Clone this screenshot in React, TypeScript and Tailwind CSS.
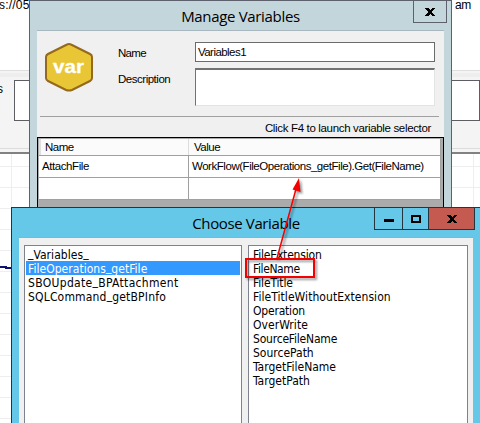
import type { ReactNode } from "react";

const components = [
  { name: "_Variables_", track: "tracking-[0.05px]" },
  { name: "FileOperations_getFile", track: "tracking-[0.04px]" },
  { name: "SBOUpdate_BPAttachment", track: "tracking-[0.32px]" },
  { name: "SQLCommand_getBPInfo", track: "tracking-[0.18px]" },
];

const properties = [
  { name: "FileExtension", track: "tracking-[-0.18px]" },
  { name: "FileName", track: "tracking-[-0.4px]" },
  { name: "FileTitle", track: "tracking-[-0.15px]" },
  { name: "FileTitleWithoutExtension", track: "tracking-[0.06px]" },
  { name: "Operation", track: "tracking-[-0.2px]" },
  { name: "OverWrite", track: "tracking-[0.05px]" },
  { name: "SourceFileName", track: "tracking-[-0.2px]" },
  { name: "SourcePath", track: "tracking-[0px]" },
  { name: "TargetFileName", track: "tracking-[0px]" },
  { name: "TargetPath", track: "tracking-[0px]" },
];

function Backdrop() {
  return (
    <div className="flex h-full flex-col bg-white text-[12px]">
      <div className="flex h-[71px] shrink-0 justify-between border-b border-[#dedede] leading-[10px]">
        <span className="-ml-px tracking-[0.2px]">s://05</span>
        <span className="mr-[9px] tracking-[-0.3px]">0 am</span>
      </div>
      <div className="flex h-[83px] shrink-0 flex-col border-b-2 border-[#818181] bg-[#f4f4f4]">
        <div className="mt-[2px] h-[4px] shrink-0 bg-[#eeeeee]" />
        <div className="mt-[3px] flex h-[41px] shrink-0">
          <span className="-ml-[3px] w-[17px] pt-[3px] leading-3">s</span>
          <div className="flex-1 border border-[#5d5d64] bg-white" />
        </div>
        <div className="mt-[27px] h-px shrink-0 bg-[#dcdcdc]" />
      </div>
      <div className="flex-1 overflow-hidden bg-white">
        <svg className="h-full w-full" width="480" height="269">
          {Array.from({ length: 13 }, (_, i) => (
            <path key={i} d={`M0 ${12.5 + i * 21}H480`} stroke="#eeeeee" />
          ))}
          <path d="M11.5 0V269M473.5 0V269" stroke="#eeeeee" />
          <path d="M0 113H6V114H12" stroke="#101070" strokeWidth="2" fill="none" />
        </svg>
      </div>
    </div>
  );
}

function VarIcon() {
  return (
    <svg width="50" height="50" viewBox="0 0 50 50">
      <path
        d="M25 2Q26 2 28 3L46 12Q48 13 48 15V36Q48 38 46 39L28 48Q25 49 22 48L4 39Q2 38 2 36V15Q2 13 4 12L22 3Q24 2 25 2Z"
        fill="#e9c635"
        stroke="#94691b"
        strokeWidth="2"
      />
      <text x="9" y="31" textLength="31" lengthAdjust="spacingAndGlyphs" fill="white" stroke="white" strokeWidth="0.3" fontSize="19" fontWeight="700" fontFamily="Liberation Sans, sans-serif">
        var
      </text>
    </svg>
  );
}

function CloseGlyph() {
  return (
    <svg width="10" height="8" viewBox="0 0 10 8" shapeRendering="crispEdges">
      <path d="M0 0H3L5 2L7 0H10L6.5 4L10 8H7L5 6L3 8H0L3.5 4Z" fill="#000" />
    </svg>
  );
}

function Cell({ children, className }: { children?: ReactNode; className: string }) {
  return <div className={`flex items-center border-[#a0a0a0] ${className}`}>{children}</div>;
}

function ManageVariables() {
  return (
    <section className="absolute top-0 left-[29px] flex h-[240px] w-[423px] flex-col border border-[#5c616d] bg-[#c3d6dc] px-[7px] text-[11.5px]">
      <header className="relative flex h-[29px] shrink-0 items-center justify-center">
        <h1 className="text-[15px] leading-5 tracking-[-0.33px] [font-family:'Open_Sans','Noto_Sans',sans-serif]">Manage Variables</h1>
        <div className="absolute -top-px -right-[3px] flex h-[23px] w-[34px] items-center justify-center border border-[#5c616d]">
          <CloseGlyph />
        </div>
      </header>
      <div className="flex flex-1 flex-col border-t border-[#a9b8be] bg-[#f0f0f0]">
        <div className="flex h-[85px] shrink-0 pt-[11px]">
          <div className="w-[81px] pl-[7px]"><VarIcon /></div>
          <div className="w-[77px]">
            <div className="pt-[4px] leading-[15px] tracking-[-0.7px]">Name</div>
            <div className="pt-[11px] leading-[15px] tracking-[-0.48px]">Description</div>
          </div>
          <div className="flex flex-col gap-[6px]">
            <div className="flex h-[20px] w-[240px] items-center border border-[#6b6b6b] bg-white pt-px pl-[2px] tracking-[-0.55px]">Variables1</div>
            <div className="h-[38px] w-[240px] border border-t-2 border-[#727272] border-r-[#e3e3e3] border-b-[#e3e3e3] bg-white" />
          </div>
        </div>
        <div className="mr-[5px] ml-[3px] h-px shrink-0 bg-[#a0a0a0]" />
        <div className="h-[20px] shrink-0 pt-[4px] pr-[13px] text-right leading-[15px] tracking-[-0.34px]">Click F4 to launch variable selector</div>
        <div className="flex flex-1 flex-col border border-black bg-[#ababab] pt-px pr-[2px] pl-px">
          <div className="flex h-[17px] shrink-0 border-r border-b border-[#a0a0a0] bg-[#fbfbfb] tracking-[-0.5px]">
            <Cell className="w-[150px] shrink-0 border-r border-l-2 border-r-[#dddddd] border-l-[#dfdfdf] pt-[2px] pl-[4px]">Name</Cell>
            <Cell className="flex-1 pt-[2px] pl-[5px]">Value</Cell>
          </div>
          <div className="flex h-[22px] shrink-0 border-r border-b border-[#a0a0a0] bg-white">
            <Cell className="w-[150px] shrink-0 border-r pt-px pl-[3px] tracking-[-0.42px]">AttachFile</Cell>
            <Cell className="flex-1 pt-px pl-[3px] tracking-[-0.46px] whitespace-nowrap">WorkFlow(FileOperations_getFile).Get(FileName)</Cell>
          </div>
          <div className="flex h-[22px] shrink-0 border-r border-b border-[#a0a0a0] bg-white">
            <Cell className="w-[150px] border-r" />
          </div>
        </div>
      </div>
    </section>
  );
}

function ItemLabel({ name }: { name: string }) {
  // Underscores are lifted so that they stay inside the 14px row.
  return name.split(/(_)/).map((part, i) =>
    part === "_" ? <span key={i} className="relative -top-[2px]">_</span> : part,
  );
}

function ChooseVariable() {
  return (
    <section className="absolute top-[207px] left-[11px] flex h-[216px] w-[469px] flex-col border-t border-l border-[#24353e] bg-[#66c8e8] pr-[7px] pl-[7px]">
      <header className="relative flex h-[29px] shrink-0 items-center justify-center">
        <h2 className="text-[15px] leading-5 tracking-[-0.37px] [font-family:'Open_Sans','Noto_Sans',sans-serif]">Choose Variable</h2>
        <div className="absolute -top-px -right-[2px] flex h-[23px] w-[101px] border border-[#24353e]">
          <div className="flex w-[28px] items-center justify-center border-r border-[#24353e] pt-[4px]">
            <div className="h-[3px] w-[10px] bg-black" />
          </div>
          <div className="flex w-[26px] items-center justify-center border-r border-[#24353e]">
            <div className="h-[8px] w-[10px] border-2 border-black" />
          </div>
          <div className="flex flex-1 items-center justify-center bg-[#c45a50]"><CloseGlyph /></div>
        </div>
      </header>
      <div className="flex flex-1 gap-[6px] border-t border-[#8eb2bf] bg-[#f0f0f0] px-[5px] pt-[7px] text-[12px] leading-[16px] [font-family:'DejaVu_Sans_Condensed','DejaVu_Sans',sans-serif] [font-stretch:condensed]">
        <ul className="w-[218px] border border-b-0 border-[#7d838e] bg-white p-px">
          {components.map((item, i) => (
            <li key={item.name} className={`h-[14px] pl-[2px] whitespace-nowrap ${item.track} ${i === 1 ? "bg-[#3399ff] text-white" : ""}`}>
              <ItemLabel name={item.name} />
            </li>
          ))}
        </ul>
        <ul className="flex-1 border border-b-0 border-[#7d838e] bg-white p-px">
          {properties.map((item) => (
            <li key={item.name} className={`h-[14px] pl-[3px] whitespace-nowrap ${item.track}`}>{item.name}</li>
          ))}
        </ul>
      </div>
    </section>
  );
}

function Callout() {
  return (
    <svg className="absolute top-[170px] left-[235px] drop-shadow-[2px_2px_1px_rgba(0,0,0,0.4)]" width="95" height="115" viewBox="235 170 95 115">
      <rect x="246" y="259" width="68" height="18" fill="none" stroke="#f50000" strokeWidth="2" />
      <path d="M276.5 260L296 189" stroke="#f50000" strokeWidth="1.5" />
      <path d="M299 178L300.5 192L292.5 189.5Z" fill="#f50000" />
    </svg>
  );
}

export default function App() {
  return (
    <main className="relative h-[423px] w-[480px] overflow-hidden text-black [font-family:'Liberation_Sans',Arial,sans-serif]">
      <Backdrop />
      <ManageVariables />
      <ChooseVariable />
      <Callout />
    </main>
  );
}
